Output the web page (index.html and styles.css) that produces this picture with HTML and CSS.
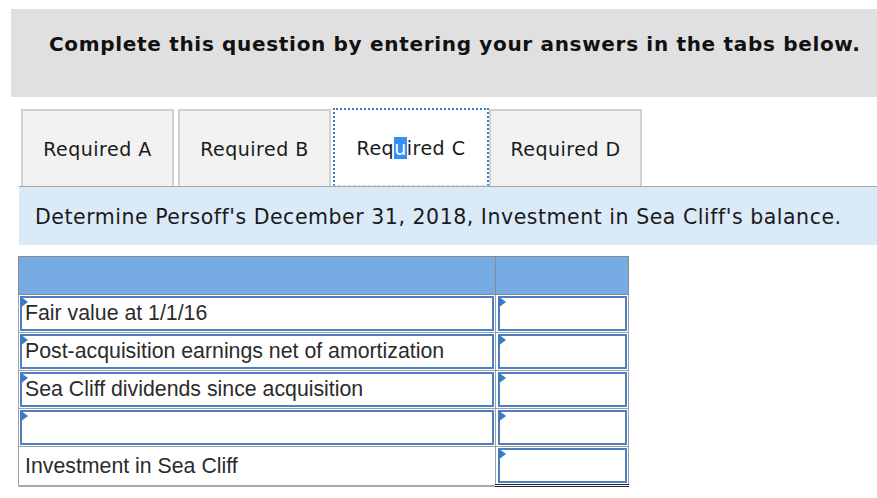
FILE: index.html
```html
<!DOCTYPE html>
<html>
<head>
<meta charset="utf-8">
<link rel="stylesheet" href="styles.css">
</head>
<body>
<div class="intro">Complete this question by entering your answers in the tabs below.</div>
<div class="tabs">
  <div class="tab">Required A</div>
  <div class="tab">Required B</div>
  <div class="tab active">Req<span class="sel">u</span>ired C</div>
  <div class="tab">Required D</div>
</div>
<div class="banner">Determine Persoff's December 31, 2018, Investment in Sea Cliff's balance.</div>
<table class="grid">
  <tr class="head"><td class="lab"></td><td class="val"></td></tr>
  <tr><td class="lab"><div class="inp"><span class="flag"></span>Fair value at 1/1/16</div></td><td class="val"><div class="inp"><span class="flag"></span></div></td></tr>
  <tr><td class="lab"><div class="inp"><span class="flag"></span>Post-acquisition earnings net of amortization</div></td><td class="val"><div class="inp"><span class="flag"></span></div></td></tr>
  <tr><td class="lab"><div class="inp"><span class="flag"></span>Sea Cliff dividends since acquisition</div></td><td class="val"><div class="inp"><span class="flag"></span></div></td></tr>
  <tr><td class="lab"><div class="inp"><span class="flag"></span></div></td><td class="val"><div class="inp"><span class="flag"></span></div></td></tr>
  <tr class="total"><td class="lab"><div class="plain">Investment in Sea Cliff</div></td><td class="val"><div class="inp"><span class="flag"></span></div></td></tr>
</table>
</body>
</html>
```
FILE: styles.css
```css
html, body {
  margin: 0;
  padding: 0;
  background: #ffffff;
  overflow: hidden;
}
body {
  width: 877px;
  height: 498px;
  font-family: "DejaVu Sans", Verdana, sans-serif;
  color: #1a1a1a;
}
.intro {
  margin: 9px 0 0 11px;
  width: 900px;
  height: 88px;
  box-sizing: border-box;
  background: #e0e0e0;
  padding: 23px 0 0 38px;
  font-weight: bold;
  font-size: 20px;
  letter-spacing: 0.68px;
  color: #111;
}
.tabs {
  display: flex;
  margin: 12px 0 0 19px;
  height: 77px;
  border-bottom: 1px solid #a8a8a8;
}
.tab {
  width: 153px;
  height: 77px;
  box-sizing: border-box;
  margin: 0 2px;
  background: #f2f2f2;
  border: 2px solid #d0d0d0;
  border-bottom: none;
  display: flex;
  align-items: center;
  justify-content: center;
  font-size: 19px;
  letter-spacing: 0.5px;
  color: #1a1a1a;
  padding-top: 1px;
}
.tab.active {
  background: #fff;
  border: 2px dotted #3a7bd5;
  border-bottom: 1px dashed #c5d6ee;
  margin: -1px -2px 0 0;
  width: 156px;
  height: 78px;
}
.sel {
  background: #3390f4;
  color: #fff;
}
.banner {
  margin-left: 19px;
  height: 58px;
  background: #dbeaf8;
  display: flex;
  align-items: center;
  padding: 2px 0 0 16px;
  box-sizing: border-box;
  font-size: 20.5px;
  letter-spacing: 0.53px;
  color: #1a1a1a;
}
.grid {
  margin: 11px 0 0 18px;
  border-collapse: collapse;
  font-family: "Liberation Sans", Arial, sans-serif;
  font-size: 21.3px;
  line-height: 24px;
  color: #2b2b2b;
}
.grid td {
  padding: 0;
  border: 1px solid #a0a0a0;
  height: 37px;
  box-sizing: border-box;
  vertical-align: top;
}
.grid .head td {
  background: #76abe3;
  height: 38px;
  border-color: #8a8a8a;
}
.grid .lab {
  width: 477px;
}
.grid .val {
  width: 133px;
}
.inp {
  position: relative;
  margin: 1px;
  height: 35px;
  box-sizing: border-box;
  border: 2px solid #4c7fc3;
  background: #fff;
  padding: 3px 0 0 3px;
  white-space: nowrap;
}
.val .inp {
  margin: 1px 1px 1px 2px;
}
.flag {
  position: absolute;
  left: -2px;
  top: -2px;
  width: 0;
  height: 0;
  border-top: 6px solid transparent;
  border-bottom: 6px solid transparent;
  border-left: 8px solid #3b7bc6;
}
.plain {
  padding: 7px 0 0 6px;
}
.total .val {
  border-bottom: 3px double #222;
}
.total td {
  height: 39px;
  border-bottom: 2px solid #a8a8a8;
}
```
